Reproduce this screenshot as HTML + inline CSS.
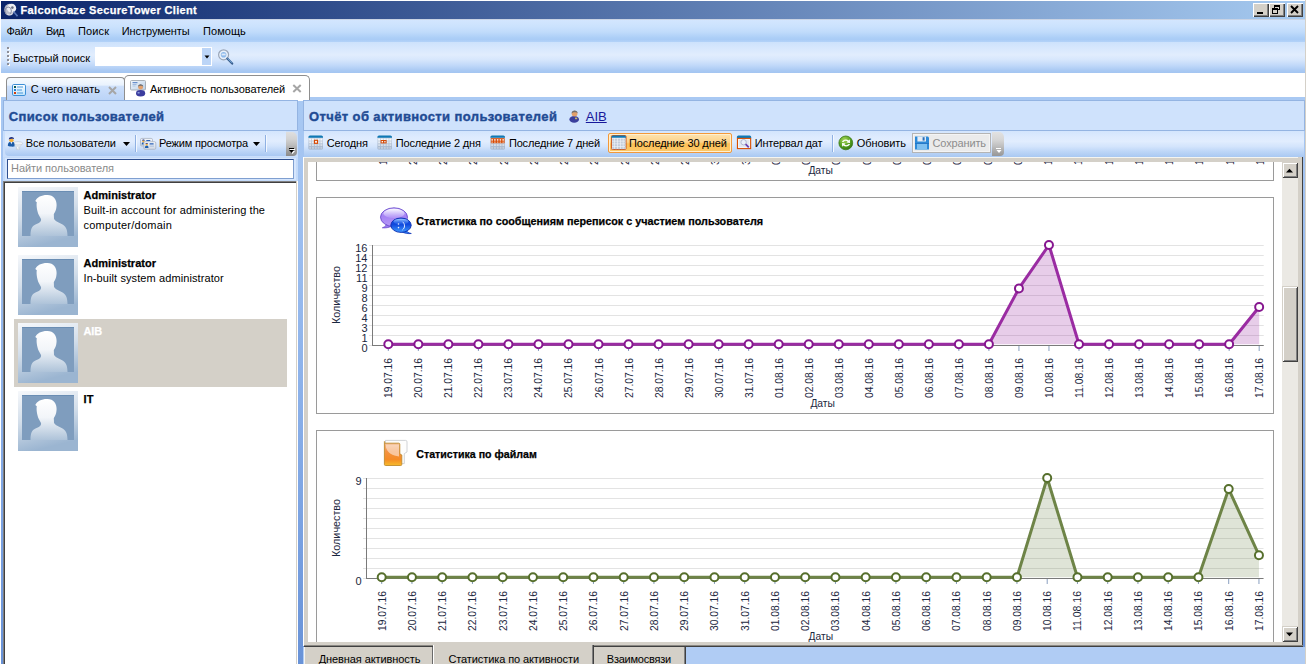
<!DOCTYPE html>
<html>
<head>
<meta charset="utf-8">
<title>FalconGaze SecureTower Client</title>
<style>
*{box-sizing:border-box;margin:0;padding:0}
html,body{width:1308px;height:664px;overflow:hidden;background:#fff}
body{font-family:"Liberation Sans", sans-serif;font-size:11px;color:#000;position:relative}
.a{position:absolute;display:block}
.t{position:absolute;white-space:nowrap}
svg{overflow:hidden}
</style>
</head>
<body>
<div class="a" style="left:0px;top:0px;width:1308px;height:664px;background:#fff"></div>
<div class="a" style="left:1px;top:97px;width:1304px;height:567px;background:linear-gradient(180deg,#a9c9f3 0%,#9fc0f0 20%,#8db2ea 50%,#779fe0 80%,#6892d7 100%)"></div>
<div class="a" style="left:1305px;top:0px;width:1px;height:664px;background:#d4d0c8"></div>
<div class="a" style="left:1306px;top:0px;width:2px;height:664px;background:#fff"></div>
<div class="a" style="left:1px;top:1px;width:1304px;height:18px;background:linear-gradient(90deg,#0a246a 0%,#a6caf0 100%)"></div>
<span class="t" style="left:20.50px;top:3.19px;font-size:11px;line-height:14px;color:#fff;letter-spacing:0.342px;font-weight:bold;-webkit-text-stroke:0.25px #fff;">FalconGaze SecureTower Client</span>
<svg class="a" style="left:3px;top:2px" width="16" height="16" viewBox="0 0 16 16">
<ellipse cx="6.5" cy="7.5" rx="5.2" ry="5.8" fill="#b9bcc8"/>
<ellipse cx="8.6" cy="6.2" rx="4.6" ry="4.4" fill="#eceef2"/>
<ellipse cx="5.2" cy="9" rx="3.2" ry="4" fill="none" stroke="#8a8fa6" stroke-width="1"/>
<circle cx="9.4" cy="5.6" r="1.3" fill="#6a6e80"/>
<path d="M10.5 9.5 L14.5 14.2" stroke="#5a78b8" stroke-width="1.6"/>
<path d="M4 12 C6 13.5 8 13 9.5 11.5" stroke="#d8dae2" stroke-width="1.2" fill="none"/>
</svg>
<div class="a" style="left:1253px;top:3px;width:16px;height:14px;background:#d4d0c8;box-shadow:inset 1px 1px 0 #fff,inset -1px -1px 0 #404040,inset -2px -2px 0 #808080"></div><div class="a" style="left:1257px;top:12px;width:6px;height:2px;background:#000"></div>
<div class="a" style="left:1269px;top:3px;width:16px;height:14px;background:#d4d0c8;box-shadow:inset 1px 1px 0 #fff,inset -1px -1px 0 #404040,inset -2px -2px 0 #808080"></div><svg class="a" style="left:1269px;top:3px" width="16" height="14" viewBox="0 0 16 14">
<rect x="5.5" y="2.5" width="5" height="4" fill="none" stroke="#000"/><rect x="5" y="2" width="6" height="2" fill="#000"/>
<rect x="3.5" y="5.5" width="5" height="5" fill="#d4d0c8" stroke="#000"/><rect x="3" y="5" width="6" height="2" fill="#000"/></svg>
<div class="a" style="left:1287px;top:3px;width:16px;height:14px;background:#d4d0c8;box-shadow:inset 1px 1px 0 #fff,inset -1px -1px 0 #404040,inset -2px -2px 0 #808080"></div><svg class="a" style="left:1287px;top:3px" width="16" height="14" viewBox="0 0 16 14">
<path d="M4 3 L11 10 M11 3 L4 10" stroke="#000" stroke-width="1.9"/></svg>
<div class="a" style="left:1px;top:19px;width:1304px;height:1px;background:#c9d3e4"></div>
<div class="a" style="left:1px;top:20px;width:1304px;height:22px;background:linear-gradient(180deg,#d3e6fe 0%,#cbe2fd 30%,#c0dbfb 55%,#adcff7 80%,#a9ccf6 88%,#b3d2f8 100%)"></div>
<span class="t" style="left:6.50px;top:24.19px;font-size:11px;line-height:14px;color:#000;letter-spacing:-0.287px;">Файл</span>
<span class="t" style="left:46.00px;top:24.19px;font-size:11px;line-height:14px;color:#000;letter-spacing:-0.602px;">Вид</span>
<span class="t" style="left:78.00px;top:24.19px;font-size:11px;line-height:14px;color:#000;letter-spacing:0.123px;">Поиск</span>
<span class="t" style="left:121.70px;top:24.19px;font-size:11px;line-height:14px;color:#000;letter-spacing:-0.063px;">Инструменты</span>
<span class="t" style="left:203.10px;top:24.19px;font-size:11px;line-height:14px;color:#000;letter-spacing:0.050px;">Помощь</span>
<div class="a" style="left:1px;top:42px;width:1304px;height:31px;background:linear-gradient(180deg,#cde2fc 0%,#d6e7fd 18%,#e1edfd 42%,#d6e6fc 58%,#c0d8f9 76%,#a9c9f3 92%,#a3c5f1 100%)"></div>
<div class="a" style="left:8px;top:48px;width:2px;height:2px;background:#fff"></div>
<div class="a" style="left:7px;top:47px;width:2px;height:2px;background:#8e8f98"></div>
<div class="a" style="left:8px;top:52px;width:2px;height:2px;background:#fff"></div>
<div class="a" style="left:7px;top:51px;width:2px;height:2px;background:#8e8f98"></div>
<div class="a" style="left:8px;top:56px;width:2px;height:2px;background:#fff"></div>
<div class="a" style="left:7px;top:55px;width:2px;height:2px;background:#8e8f98"></div>
<div class="a" style="left:8px;top:60px;width:2px;height:2px;background:#fff"></div>
<div class="a" style="left:7px;top:59px;width:2px;height:2px;background:#8e8f98"></div>
<div class="a" style="left:8px;top:64px;width:2px;height:2px;background:#fff"></div>
<div class="a" style="left:7px;top:63px;width:2px;height:2px;background:#8e8f98"></div>
<span class="t" style="left:12.90px;top:51.19px;font-size:11px;line-height:14px;color:#000;letter-spacing:-0.017px;">Быстрый поиск</span>
<div class="a" style="left:95px;top:47px;width:117px;height:19px;background:#fff"></div>
<div class="a" style="left:202px;top:48px;width:9px;height:17px;background:#bcd5f7"></div>
<svg class="a" style="left:204px;top:55px" width="6" height="4"><path d="M0.5 0.5 L5.5 0.5 L3 3.5 Z" fill="#000"/></svg>
<svg class="a" style="left:217px;top:48px" width="18" height="18" viewBox="0 0 18 18">
<circle cx="6.6" cy="6.8" r="5" fill="#e9f1fb" stroke="#9aa6b8" stroke-width="1.2"/>
<circle cx="6.6" cy="6.8" r="2.8" fill="#8cb8ea"/>
<rect x="4.6" y="5.6" width="4" height="1.8" fill="#dfeaf8"/>
<path d="M10.3 10.6 L15.2 15.6" stroke="#3a5f8f" stroke-width="2.2" stroke-linecap="round"/>
<path d="M10.6 10.4 L15 14.8" stroke="#7fb4e6" stroke-width="0.9"/>
</svg>
<div class="a" style="left:1px;top:73px;width:1304px;height:24px;background:#fff"></div>
<div class="a" style="left:6px;top:77px;width:119px;height:23px;border:1px solid #8e8e8e;border-bottom:none;border-radius:4px 4px 0 0;background:linear-gradient(180deg,#f6fafe 0%,#e9f2fd 33%,#cfe1fb 36%,#c3d9f9 70%,#bbd4f7 100%)"></div>
<svg class="a" style="left:12px;top:84px" width="14" height="12" viewBox="0 0 14 12">
<defs><linearGradient id="g1" x1="0" y1="0" x2="0" y2="1"><stop offset="0" stop-color="#fff"/><stop offset="1" stop-color="#bfe3fb"/></linearGradient></defs>
<rect x="0.5" y="0.5" width="13" height="11" rx="1.3" fill="url(#g1)" stroke="#3d8fd6"/>
<rect x="2" y="2" width="2" height="2" fill="#0f5a55"/><rect x="2" y="5" width="2" height="2" fill="#2a7fd4"/><rect x="2" y="8" width="2" height="2" fill="#d43c0a"/>
<rect x="5" y="2.5" width="6" height="1" fill="#4a9adc"/><rect x="5" y="5.5" width="5" height="1" fill="#4a9adc"/><rect x="5" y="8.5" width="6" height="1" fill="#4a9adc"/>
</svg>
<span class="t" style="left:30.70px;top:82.19px;font-size:11px;line-height:14px;color:#000;letter-spacing:-0.079px;">С чего начать</span>
<svg class="a" style="left:108px;top:86px" width="9" height="9" viewBox="0 0 9 9"><path d="M1 1 L8 8 M8 1 L1 8" stroke="#a6a6a6" stroke-width="2"/></svg>
<div class="a" style="left:124px;top:75px;width:186px;height:26px;border:1px solid #8e8e8e;border-bottom:none;border-radius:5px 5px 0 0;background:#fff"></div>
<svg class="a" style="left:130px;top:80px" width="17" height="17" viewBox="0 0 17 17">
<defs><linearGradient id="g2" x1="0" y1="0" x2="1" y2="1"><stop offset="0" stop-color="#f4f8fc"/><stop offset="1" stop-color="#b9cfe6"/></linearGradient></defs>
<rect x="0.5" y="0.5" width="15" height="9.5" rx="1" fill="url(#g2)" stroke="#a9b0b8"/>
<rect x="2.5" y="2.2" width="5" height="1" fill="#4a78c0"/><rect x="2.5" y="4.2" width="4" height="0.9" fill="#8fb0dc"/><rect x="2.5" y="5.6" width="3" height="0.9" fill="#a9c3e4"/>
<ellipse cx="10.6" cy="13.2" rx="4.6" ry="3.2" fill="#3b3c9e"/>
<circle cx="10.6" cy="7.2" r="2.4" fill="#e3a06c"/>
<path d="M8 7 C7.6 3.2 13.6 3.2 13.2 7 C12.6 5.4 8.8 5.4 8 7 Z" fill="#666a70"/>
<rect x="7.6" y="12.2" width="2" height="1.2" fill="#9fb4ea"/>
</svg>
<span class="t" style="left:150.10px;top:82.19px;font-size:11px;line-height:14px;color:#000;letter-spacing:-0.070px;">Активность пользователей</span>
<svg class="a" style="left:292px;top:84px" width="10" height="9" viewBox="0 0 10 9"><path d="M1.3 1 L8.7 8 M8.7 1 L1.3 8" stroke="#a6a6a6" stroke-width="2"/></svg>
<div class="a" style="left:3px;top:100px;width:295px;height:31px;background:#cfe2fc;border:1px solid #94b4e2"></div>
<span class="t" style="left:8.70px;top:108.50px;font-size:13px;line-height:16px;color:#1f4b94;letter-spacing:0.371px;font-weight:bold;-webkit-text-stroke:0.4px #1f4b94;">Список пользователей</span>
<div class="a" style="left:3px;top:131px;width:295px;height:26px;background:#c9defb"></div>
<div class="a" style="left:5px;top:131px;width:281px;height:25px;background:linear-gradient(180deg,#d3e5fd 0%,#deebfe 25%,#e1edfe 40%,#d3e4fc 60%,#bcd5f7 80%,#a9c8f2 100%);border-radius:0 0 0 4px"></div>
<svg class="a" style="left:7px;top:136px" width="17" height="15" viewBox="0 0 17 15">
<defs><linearGradient id="fg" x1="0" y1="0" x2="0" y2="1"><stop offset="0" stop-color="#f6f8fb"/><stop offset="1" stop-color="#c9d3df"/></linearGradient></defs>
<path d="M6.2 7.6 L15.5 7.6 L12.7 11 L12.7 13.6 L9.3 13.6 L9.3 11 Z" fill="url(#fg)" stroke="#c2cbd6" stroke-width="0.5"/>
<ellipse cx="10.9" cy="7.3" rx="4.8" ry="1.7" fill="#eef2f7" stroke="#bcc6d2" stroke-width="0.6"/>
<path d="M10.4 11 L11.2 13.4" stroke="#fff" stroke-width="0.8"/>
<path d="M0.8 9.8 C0.8 6.6 2.4 5.5 4.4 5.5 C6.4 5.5 7.5 6.6 7.5 8.6 L7.5 10.6 C5 10.9 2.4 10.6 0.8 9.8 Z" fill="#1b5aa6"/>
<path d="M3.3 5.7 L5.5 5.7 L4.4 8.2 Z" fill="#eaf1fa"/>
<ellipse cx="4.4" cy="4.2" rx="2.2" ry="1.9" fill="#f4b23c"/>
<path d="M1.8 3.4 C1.6 0.2 7.2 0.1 7.1 3.2 C6 2.6 3.4 2.6 1.8 3.4 Z" fill="#1f2f80"/>
</svg>
<span class="t" style="left:25.80px;top:136.19px;font-size:11px;line-height:14px;color:#000;letter-spacing:-0.122px;">Все пользователи</span>
<svg class="a" style="left:123px;top:142px" width="7" height="4"><path d="M0 0 L7 0 L3.5 4 Z" fill="#000"/></svg>
<div class="a" style="left:135px;top:135px;width:1px;height:17px;background:#8fb1e3"></div>
<div class="a" style="left:136px;top:135px;width:1px;height:17px;background:#f3f8ff"></div>
<svg class="a" style="left:140px;top:136px" width="17" height="15" viewBox="0 0 17 15">
<defs><linearGradient id="cdg" x1="0" y1="0" x2="0" y2="1"><stop offset="0" stop-color="#f3f6fa"/><stop offset="1" stop-color="#cfd8e4"/></linearGradient></defs>
<g id="idc"><rect x="0.5" y="2.4" width="12" height="7.6" rx="1.3" fill="url(#cdg)" stroke="#a9b3c1" stroke-width="0.8"/>
<path d="M1.6 8.6 C1.6 6.8 2.4 6.2 3.4 6.2 C4.4 6.2 5.2 6.8 5.2 8.6 Z" fill="#1d5fae"/>
<ellipse cx="3.4" cy="5.3" rx="1.2" ry="1.1" fill="#f4b23c"/>
<path d="M2 4.8 C2 3.2 4.9 3.2 4.8 4.7 C4 4.3 2.8 4.3 2 4.8 Z" fill="#1f2f80"/>
<rect x="6.2" y="4" width="4.2" height="1.1" rx="0.5" fill="#2a62b8"/></g>
<use href="#idc" x="3.3" y="3.3"/>
<rect x="9.6" y="9.7" width="4.4" height="0.8" fill="#9cb4d8"/>
</svg>
<span class="t" style="left:159.00px;top:136.19px;font-size:11px;line-height:14px;color:#000;letter-spacing:-0.158px;">Режим просмотра</span>
<svg class="a" style="left:253px;top:142px" width="7" height="4"><path d="M0 0 L7 0 L3.5 4 Z" fill="#000"/></svg>
<div class="a" style="left:265px;top:135px;width:1px;height:17px;background:#8fb1e3"></div>
<div class="a" style="left:266px;top:135px;width:1px;height:17px;background:#f3f8ff"></div>
<div class="a" style="left:286px;top:132px;width:11px;height:24px;border-radius:0 5px 4px 0;background:linear-gradient(180deg,#dfdfdf 0%,#d2d2d2 30%,#bdbdbd 55%,#9d9d9d 80%,#8a8a8a 100%)"></div>
<div class="a" style="left:290px;top:149px;width:5px;height:1px;background:#fff"></div>
<div class="a" style="left:289px;top:148px;width:5px;height:1px;background:#000"></div>
<svg class="a" style="left:289px;top:150px" width="7" height="5"><path d="M1 1 L6 1 L3.5 4 Z" fill="#fff"/><path d="M0 0 L5 0 L2.5 3 Z" fill="#000"/></svg>
<div class="a" style="left:3px;top:157px;width:295px;height:24px;background:#c4dbfa"></div>
<div class="a" style="left:5px;top:158px;width:291px;height:22px;background:#d6e6fd"></div>
<div class="a" style="left:7px;top:159px;width:287px;height:20px;background:#fff;border:1px solid #7f9fd0;border-top-color:#2e4f8f;border-left-color:#2e4f8f"></div>
<span class="t" style="left:11.10px;top:161.19px;font-size:11px;line-height:14px;color:#8a8a8a;letter-spacing:-0.073px;">Найти пользователя</span>
<div class="a" style="left:3px;top:181px;width:294px;height:483px;background:#fff;border-left:1px solid #808080;border-top:1px solid #808080"></div>
<div class="a" style="left:4px;top:182px;width:293px;height:482px;background:#fff;border-left:1px solid #404040;border-top:1px solid #404040"></div>
<div class="a" style="left:296px;top:181px;width:1px;height:483px;background:#d4d0c8"></div>
<div class="a" style="left:297px;top:181px;width:1px;height:483px;background:#fff"></div>
<div class="a" style="left:14px;top:319px;width:273px;height:68px;background:#d4d0c8"></div>
<svg class="a" style="left:18px;top:187px" width="60" height="60" viewBox="0 0 60 60">
<defs><linearGradient id="av0" x1="0" y1="0" x2="0.25" y2="1"><stop offset="0" stop-color="#f6f8fb"/><stop offset="0.5" stop-color="#d3deea"/><stop offset="1" stop-color="#9bb5d1"/></linearGradient>
<linearGradient id="sl0" x1="0" y1="0" x2="0" y2="1"><stop offset="0" stop-color="#ffffff"/><stop offset="0.45" stop-color="#f2f5f9"/><stop offset="1" stop-color="#aec3d9"/></linearGradient></defs>
<rect width="60" height="60" fill="url(#av0)"/>
<rect x="4" y="4" width="52" height="45" fill="#7f9dbe"/>
<rect x="4" y="4" width="52" height="1" fill="#6a8db3"/>
<path transform="translate(4,4)" d="M 8.5,45 C 8.5,38 10,35 14,33.3 C 17.5,32 19.5,30.5 19,28 L 16.8,24 C 15,20 14.2,14 14.8,11.2 L 13.3,10 C 15,6 20,3.8 25.5,4 C 31.5,4.2 34.8,8.5 34.6,14 C 34.5,17 34,19 33,21 L 31.8,23 L 32,28 C 34,31 38,32 41,33.8 C 44.5,36 45.5,40 45.5,45 Z" fill="url(#sl0)"/>
</svg>
<svg class="a" style="left:18px;top:255px" width="60" height="60" viewBox="0 0 60 60">
<defs><linearGradient id="av1" x1="0" y1="0" x2="0.25" y2="1"><stop offset="0" stop-color="#f6f8fb"/><stop offset="0.5" stop-color="#d3deea"/><stop offset="1" stop-color="#9bb5d1"/></linearGradient>
<linearGradient id="sl1" x1="0" y1="0" x2="0" y2="1"><stop offset="0" stop-color="#ffffff"/><stop offset="0.45" stop-color="#f2f5f9"/><stop offset="1" stop-color="#aec3d9"/></linearGradient></defs>
<rect width="60" height="60" fill="url(#av1)"/>
<rect x="4" y="4" width="52" height="45" fill="#7f9dbe"/>
<rect x="4" y="4" width="52" height="1" fill="#6a8db3"/>
<path transform="translate(4,4)" d="M 8.5,45 C 8.5,38 10,35 14,33.3 C 17.5,32 19.5,30.5 19,28 L 16.8,24 C 15,20 14.2,14 14.8,11.2 L 13.3,10 C 15,6 20,3.8 25.5,4 C 31.5,4.2 34.8,8.5 34.6,14 C 34.5,17 34,19 33,21 L 31.8,23 L 32,28 C 34,31 38,32 41,33.8 C 44.5,36 45.5,40 45.5,45 Z" fill="url(#sl1)"/>
</svg>
<svg class="a" style="left:18px;top:323px" width="60" height="60" viewBox="0 0 60 60">
<defs><linearGradient id="av2" x1="0" y1="0" x2="0.25" y2="1"><stop offset="0" stop-color="#f6f8fb"/><stop offset="0.5" stop-color="#d3deea"/><stop offset="1" stop-color="#9bb5d1"/></linearGradient>
<linearGradient id="sl2" x1="0" y1="0" x2="0" y2="1"><stop offset="0" stop-color="#ffffff"/><stop offset="0.45" stop-color="#f2f5f9"/><stop offset="1" stop-color="#aec3d9"/></linearGradient></defs>
<rect width="60" height="60" fill="url(#av2)"/>
<rect x="4" y="4" width="52" height="45" fill="#7f9dbe"/>
<rect x="4" y="4" width="52" height="1" fill="#6a8db3"/>
<path transform="translate(4,4)" d="M 8.5,45 C 8.5,38 10,35 14,33.3 C 17.5,32 19.5,30.5 19,28 L 16.8,24 C 15,20 14.2,14 14.8,11.2 L 13.3,10 C 15,6 20,3.8 25.5,4 C 31.5,4.2 34.8,8.5 34.6,14 C 34.5,17 34,19 33,21 L 31.8,23 L 32,28 C 34,31 38,32 41,33.8 C 44.5,36 45.5,40 45.5,45 Z" fill="url(#sl2)"/>
</svg>
<svg class="a" style="left:18px;top:391px" width="60" height="60" viewBox="0 0 60 60">
<defs><linearGradient id="av3" x1="0" y1="0" x2="0.25" y2="1"><stop offset="0" stop-color="#f6f8fb"/><stop offset="0.5" stop-color="#d3deea"/><stop offset="1" stop-color="#9bb5d1"/></linearGradient>
<linearGradient id="sl3" x1="0" y1="0" x2="0" y2="1"><stop offset="0" stop-color="#ffffff"/><stop offset="0.45" stop-color="#f2f5f9"/><stop offset="1" stop-color="#aec3d9"/></linearGradient></defs>
<rect width="60" height="60" fill="url(#av3)"/>
<rect x="4" y="4" width="52" height="45" fill="#7f9dbe"/>
<rect x="4" y="4" width="52" height="1" fill="#6a8db3"/>
<path transform="translate(4,4)" d="M 8.5,45 C 8.5,38 10,35 14,33.3 C 17.5,32 19.5,30.5 19,28 L 16.8,24 C 15,20 14.2,14 14.8,11.2 L 13.3,10 C 15,6 20,3.8 25.5,4 C 31.5,4.2 34.8,8.5 34.6,14 C 34.5,17 34,19 33,21 L 31.8,23 L 32,28 C 34,31 38,32 41,33.8 C 44.5,36 45.5,40 45.5,45 Z" fill="url(#sl3)"/>
</svg>
<span class="t" style="left:83.50px;top:188.19px;font-size:11px;line-height:14px;color:#000;letter-spacing:0.037px;font-weight:bold;-webkit-text-stroke:0.25px #000;">Administrator</span>
<span class="t" style="left:83.50px;top:203.19px;font-size:11px;line-height:14px;color:#000;letter-spacing:0.096px;">Built-in account for administering the</span>
<span class="t" style="left:83.50px;top:218.19px;font-size:11px;line-height:14px;color:#000;letter-spacing:0.240px;">computer/domain</span>
<span class="t" style="left:83.50px;top:256.19px;font-size:11px;line-height:14px;color:#000;letter-spacing:0.037px;font-weight:bold;-webkit-text-stroke:0.25px #000;">Administrator</span>
<span class="t" style="left:83.50px;top:271.19px;font-size:11px;line-height:14px;color:#000;letter-spacing:0.095px;">In-built system administrator</span>
<span class="t" style="left:83.50px;top:324.19px;font-size:11px;line-height:14px;color:#fff;letter-spacing:-0.118px;font-weight:bold;-webkit-text-stroke:0.25px #fff;">AIB</span>
<span class="t" style="left:83.50px;top:392.19px;font-size:11px;line-height:14px;color:#000;letter-spacing:0.284px;font-weight:bold;-webkit-text-stroke:0.25px #000;">IT</span>
<div class="a" style="left:303px;top:100px;width:1002px;height:31px;background:#cfe2fc;border:1px solid #94b4e2"></div>
<span class="t" style="left:309.00px;top:108.50px;font-size:13px;line-height:16px;color:#1f4b94;letter-spacing:0.388px;font-weight:bold;-webkit-text-stroke:0.4px #1f4b94;">Отчёт об активности пользователей</span>
<svg class="a" style="left:569px;top:109px" width="11" height="14" viewBox="0 0 11 14">
<ellipse cx="5.2" cy="10.4" rx="4.8" ry="3.4" fill="#3b3f9c"/>
<circle cx="5.6" cy="4.6" r="2.9" fill="#e3a06a"/>
<path d="M2.6 4.4 C2.6 0.6 8.6 0.6 8.7 4.2 C7.4 2.8 4 2.8 2.6 4.4 Z" fill="#6f6f6f"/>
<rect x="6" y="8.6" width="2.2" height="1.6" fill="#c9b36a"/>
</svg>
<span class="t" style="left:585.80px;top:108.50px;font-size:13px;line-height:16px;color:#18189a;letter-spacing:-0.023px;text-decoration:underline">AIB</span>
<div class="a" style="left:304px;top:131px;width:1000px;height:26px;background:linear-gradient(180deg,#d3e5fd 0%,#deebfe 25%,#e1edfe 40%,#d3e4fc 60%,#bcd5f7 80%,#a9c8f2 100%)"></div>
<svg class="a" style="left:308px;top:135px" width="16" height="15" viewBox="0 0 16 15"><defs><linearGradient id="cg1308" x1="0" y1="0" x2="0" y2="1"><stop offset="0" stop-color="#d6dfea"/><stop offset="1" stop-color="#9cafc8"/></linearGradient></defs><rect x="0.4" y="0.5" width="14.6" height="14" rx="1.6" fill="url(#cg1308)" stroke="none" stroke-width="0"/><path d="M0.4 2.8 V2 Q0.4 0.5 2 0.5 H13.4 Q15 0.5 15 2 V2.8 Z" fill="#0f79b5"/><rect x="1.2" y="3.6" width="1.9" height="1.9" fill="#fff" opacity="0.85"/><rect x="4.0" y="3.6" width="1.9" height="1.9" fill="#fff" opacity="0.85"/><rect x="6.8" y="3.6" width="1.9" height="1.9" fill="#fff" opacity="0.85"/><rect x="9.6" y="3.6" width="1.9" height="1.9" fill="#fff" opacity="0.85"/><rect x="12.4" y="3.6" width="1.9" height="1.9" fill="#fff" opacity="0.85"/><rect x="1.2" y="6.4" width="1.9" height="1.9" fill="#fff" opacity="0.68"/><rect x="4.0" y="6.4" width="1.9" height="1.9" fill="#fff" opacity="0.68"/><rect x="6.8" y="6.4" width="1.9" height="1.9" fill="#fff" opacity="0.68"/><rect x="9.6" y="6.4" width="1.9" height="1.9" fill="#fff" opacity="0.68"/><rect x="12.4" y="6.4" width="1.9" height="1.9" fill="#fff" opacity="0.68"/><rect x="1.2" y="9.2" width="1.9" height="1.9" fill="#fff" opacity="0.51"/><rect x="4.0" y="9.2" width="1.9" height="1.9" fill="#fff" opacity="0.51"/><rect x="6.8" y="9.2" width="1.9" height="1.9" fill="#fff" opacity="0.51"/><rect x="9.6" y="9.2" width="1.9" height="1.9" fill="#fff" opacity="0.51"/><rect x="12.4" y="9.2" width="1.9" height="1.9" fill="#fff" opacity="0.51"/><rect x="1.2" y="12.0" width="1.9" height="1.9" fill="#fff" opacity="0.34"/><rect x="4.0" y="12.0" width="1.9" height="1.9" fill="#fff" opacity="0.34"/><rect x="6.8" y="12.0" width="1.9" height="1.9" fill="#fff" opacity="0.34"/><rect x="9.6" y="12.0" width="1.9" height="1.9" fill="#fff" opacity="0.34"/><rect x="12.4" y="12.0" width="1.9" height="1.9" fill="#fff" opacity="0.34"/><rect x="6.5" y="5.3" width="3" height="3" fill="#fff" stroke="#d64a05" stroke-width="1.2"/></svg>
<span class="t" style="left:326.80px;top:136.19px;font-size:11px;line-height:14px;color:#000;letter-spacing:-0.182px;">Сегодня</span>
<svg class="a" style="left:377px;top:135px" width="16" height="15" viewBox="0 0 16 15"><defs><linearGradient id="cg2377" x1="0" y1="0" x2="0" y2="1"><stop offset="0" stop-color="#d6dfea"/><stop offset="1" stop-color="#9cafc8"/></linearGradient></defs><rect x="0.4" y="0.5" width="14.6" height="14" rx="1.6" fill="url(#cg2377)" stroke="none" stroke-width="0"/><path d="M0.4 2.8 V2 Q0.4 0.5 2 0.5 H13.4 Q15 0.5 15 2 V2.8 Z" fill="#0f79b5"/><rect x="1.2" y="3.6" width="1.9" height="1.9" fill="#fff" opacity="0.85"/><rect x="4.0" y="3.6" width="1.9" height="1.9" fill="#fff" opacity="0.85"/><rect x="6.8" y="3.6" width="1.9" height="1.9" fill="#fff" opacity="0.85"/><rect x="9.6" y="3.6" width="1.9" height="1.9" fill="#fff" opacity="0.85"/><rect x="12.4" y="3.6" width="1.9" height="1.9" fill="#fff" opacity="0.85"/><rect x="1.2" y="6.4" width="1.9" height="1.9" fill="#fff" opacity="0.68"/><rect x="4.0" y="6.4" width="1.9" height="1.9" fill="#fff" opacity="0.68"/><rect x="6.8" y="6.4" width="1.9" height="1.9" fill="#fff" opacity="0.68"/><rect x="9.6" y="6.4" width="1.9" height="1.9" fill="#fff" opacity="0.68"/><rect x="12.4" y="6.4" width="1.9" height="1.9" fill="#fff" opacity="0.68"/><rect x="1.2" y="9.2" width="1.9" height="1.9" fill="#fff" opacity="0.51"/><rect x="4.0" y="9.2" width="1.9" height="1.9" fill="#fff" opacity="0.51"/><rect x="6.8" y="9.2" width="1.9" height="1.9" fill="#fff" opacity="0.51"/><rect x="9.6" y="9.2" width="1.9" height="1.9" fill="#fff" opacity="0.51"/><rect x="12.4" y="9.2" width="1.9" height="1.9" fill="#fff" opacity="0.51"/><rect x="1.2" y="12.0" width="1.9" height="1.9" fill="#fff" opacity="0.34"/><rect x="4.0" y="12.0" width="1.9" height="1.9" fill="#fff" opacity="0.34"/><rect x="6.8" y="12.0" width="1.9" height="1.9" fill="#fff" opacity="0.34"/><rect x="9.6" y="12.0" width="1.9" height="1.9" fill="#fff" opacity="0.34"/><rect x="12.4" y="12.0" width="1.9" height="1.9" fill="#fff" opacity="0.34"/><rect x="3.6" y="5" width="6" height="3.4" fill="#d64a05"/><rect x="4.6" y="6" width="1.4" height="1.4" fill="#fff"/><rect x="7.2" y="6" width="1.4" height="1.4" fill="#dfe6f0"/></svg>
<span class="t" style="left:395.70px;top:136.19px;font-size:11px;line-height:14px;color:#000;letter-spacing:-0.144px;">Последние 2 дня</span>
<svg class="a" style="left:490px;top:135px" width="16" height="15" viewBox="0 0 16 15"><defs><linearGradient id="cg7490" x1="0" y1="0" x2="0" y2="1"><stop offset="0" stop-color="#d6dfea"/><stop offset="1" stop-color="#9cafc8"/></linearGradient></defs><rect x="0.4" y="0.5" width="14.6" height="14" rx="1.6" fill="url(#cg7490)" stroke="none" stroke-width="0"/><path d="M0.4 2.8 V2 Q0.4 0.5 2 0.5 H13.4 Q15 0.5 15 2 V2.8 Z" fill="#0f79b5"/><rect x="1.2" y="3.6" width="1.9" height="1.9" fill="#fff" opacity="0.85"/><rect x="4.0" y="3.6" width="1.9" height="1.9" fill="#fff" opacity="0.85"/><rect x="6.8" y="3.6" width="1.9" height="1.9" fill="#fff" opacity="0.85"/><rect x="9.6" y="3.6" width="1.9" height="1.9" fill="#fff" opacity="0.85"/><rect x="12.4" y="3.6" width="1.9" height="1.9" fill="#fff" opacity="0.85"/><rect x="1.2" y="6.4" width="1.9" height="1.9" fill="#fff" opacity="0.68"/><rect x="4.0" y="6.4" width="1.9" height="1.9" fill="#fff" opacity="0.68"/><rect x="6.8" y="6.4" width="1.9" height="1.9" fill="#fff" opacity="0.68"/><rect x="9.6" y="6.4" width="1.9" height="1.9" fill="#fff" opacity="0.68"/><rect x="12.4" y="6.4" width="1.9" height="1.9" fill="#fff" opacity="0.68"/><rect x="1.2" y="9.2" width="1.9" height="1.9" fill="#fff" opacity="0.51"/><rect x="4.0" y="9.2" width="1.9" height="1.9" fill="#fff" opacity="0.51"/><rect x="6.8" y="9.2" width="1.9" height="1.9" fill="#fff" opacity="0.51"/><rect x="9.6" y="9.2" width="1.9" height="1.9" fill="#fff" opacity="0.51"/><rect x="12.4" y="9.2" width="1.9" height="1.9" fill="#fff" opacity="0.51"/><rect x="1.2" y="12.0" width="1.9" height="1.9" fill="#fff" opacity="0.34"/><rect x="4.0" y="12.0" width="1.9" height="1.9" fill="#fff" opacity="0.34"/><rect x="6.8" y="12.0" width="1.9" height="1.9" fill="#fff" opacity="0.34"/><rect x="9.6" y="12.0" width="1.9" height="1.9" fill="#fff" opacity="0.34"/><rect x="12.4" y="12.0" width="1.9" height="1.9" fill="#fff" opacity="0.34"/><rect x="0.8" y="3.2" width="13.8" height="5" fill="#d64a05"/><rect x="1.40" y="4.2" width="1.5" height="1.4" fill="#fff"/><rect x="1.40" y="6.6" width="1.5" height="1" fill="#f6d9c8"/><rect x="4.15" y="4.2" width="1.5" height="1.4" fill="#fff"/><rect x="4.15" y="6.6" width="1.5" height="1" fill="#f6d9c8"/><rect x="6.90" y="4.2" width="1.5" height="1.4" fill="#fff"/><rect x="6.90" y="6.6" width="1.5" height="1" fill="#f6d9c8"/><rect x="9.65" y="4.2" width="1.5" height="1.4" fill="#fff"/><rect x="9.65" y="6.6" width="1.5" height="1" fill="#f6d9c8"/><rect x="12.40" y="4.2" width="1.5" height="1.4" fill="#fff"/><rect x="12.40" y="6.6" width="1.5" height="1" fill="#f6d9c8"/></svg>
<span class="t" style="left:508.90px;top:136.19px;font-size:11px;line-height:14px;color:#000;letter-spacing:-0.148px;">Последние 7 дней</span>
<div class="a" style="left:608px;top:133px;width:124px;height:20px;border:1px solid #f3993a;border-radius:2px;background:linear-gradient(180deg,#fde3b0 0%,#fdd38a 45%,#fbc056 55%,#fdc96a 100%);box-shadow:inset 0 0 0 1px #fff0cf"></div>
<svg class="a" style="left:611px;top:135px" width="16" height="15" viewBox="0 0 16 15"><defs><linearGradient id="cg30611" x1="0" y1="0" x2="0" y2="1"><stop offset="0" stop-color="#d6dfea"/><stop offset="1" stop-color="#9cafc8"/></linearGradient></defs><rect x="0.4" y="0.5" width="14.6" height="14" rx="1" fill="#f1f4f8" stroke="#c8541a" stroke-width="1"/><path d="M0.4 2.8 V2 Q0.4 0.5 2 0.5 H13.4 Q15 0.5 15 2 V2.8 Z" fill="#0f79b5"/><rect x="1.2" y="3.6" width="2.2" height="2.2" fill="#c3cddb"/><rect x="4.0" y="3.6" width="2.2" height="2.2" fill="#c3cddb"/><rect x="6.8" y="3.6" width="2.2" height="2.2" fill="#c3cddb"/><rect x="9.6" y="3.6" width="2.2" height="2.2" fill="#c3cddb"/><rect x="12.4" y="3.6" width="2.2" height="2.2" fill="#c3cddb"/><rect x="1.2" y="6.4" width="2.2" height="2.2" fill="#c3cddb"/><rect x="4.0" y="6.4" width="2.2" height="2.2" fill="#c3cddb"/><rect x="6.8" y="6.4" width="2.2" height="2.2" fill="#c3cddb"/><rect x="9.6" y="6.4" width="2.2" height="2.2" fill="#c3cddb"/><rect x="12.4" y="6.4" width="2.2" height="2.2" fill="#c3cddb"/><rect x="1.2" y="9.2" width="2.2" height="2.2" fill="#c3cddb"/><rect x="4.0" y="9.2" width="2.2" height="2.2" fill="#c3cddb"/><rect x="6.8" y="9.2" width="2.2" height="2.2" fill="#c3cddb"/><rect x="9.6" y="9.2" width="2.2" height="2.2" fill="#c3cddb"/><rect x="12.4" y="9.2" width="2.2" height="2.2" fill="#c3cddb"/><rect x="1.2" y="12.0" width="2.2" height="2.2" fill="#c3cddb"/><rect x="4.0" y="12.0" width="2.2" height="2.2" fill="#c3cddb"/><rect x="6.8" y="12.0" width="2.2" height="2.2" fill="#c3cddb"/><rect x="9.6" y="12.0" width="2.2" height="2.2" fill="#c3cddb"/><rect x="12.4" y="12.0" width="2.2" height="2.2" fill="#c3cddb"/></svg>
<span class="t" style="left:628.90px;top:136.19px;font-size:11px;line-height:14px;color:#000;letter-spacing:-0.111px;">Последние 30 дней</span>
<svg class="a" style="left:736px;top:135px" width="16" height="15" viewBox="0 0 16 15"><defs><linearGradient id="cgi736" x1="0" y1="0" x2="0" y2="1"><stop offset="0" stop-color="#d6dfea"/><stop offset="1" stop-color="#9cafc8"/></linearGradient></defs><path d="M0.9 3.2 V2 Q0.9 0.5 2.4 0.5 H13.7 Q15.2 0.5 15.2 2 V3.2 Z" fill="#0f79b5"/><rect x="1.45" y="3.4" width="13.2" height="10.2" fill="#e3e8ef" stroke="#d94e00" stroke-width="1.1"/><rect x="2.6" y="4.4" width="10.9" height="8.2" fill="none" stroke="#f6f8fb" stroke-width="0.8"/><circle cx="7.6" cy="7.2" r="2.7" fill="#eaf1fb" stroke="#aab4cc" stroke-width="0.9"/><path d="M9.6 9.2 L12.8 12.4" stroke="#6a3fb0" stroke-width="1.7"/></svg>
<span class="t" style="left:754.70px;top:136.19px;font-size:11px;line-height:14px;color:#000;letter-spacing:-0.182px;">Интервал дат</span>
<div class="a" style="left:832px;top:135px;width:1px;height:17px;background:#8fb1e3"></div>
<div class="a" style="left:833px;top:135px;width:1px;height:17px;background:#f3f8ff"></div>
<svg class="a" style="left:838px;top:135px" width="16" height="16" viewBox="0 0 16 16">
<defs><radialGradient id="rg" cx="0.4" cy="0.3" r="0.8"><stop offset="0" stop-color="#a9d95a"/><stop offset="0.6" stop-color="#4f9a1e"/><stop offset="1" stop-color="#2f6a10"/></radialGradient></defs>
<circle cx="7.8" cy="7.9" r="6.9" fill="url(#rg)" stroke="#3b7a18" stroke-width="0.8"/>
<path d="M4 7 C4.5 4.6 8.5 3.6 10.6 5.4 L11.8 4.2 L12 8 L8.4 7.6 L9.6 6.5 C8.2 5.4 6 5.8 5.6 7 Z" fill="#fff"/>
<path d="M12 9 C11.5 11.4 7.5 12.4 5.4 10.6 L4.2 11.8 L4 8 L7.6 8.4 L6.4 9.5 C7.8 10.6 10 10.2 10.4 9 Z" fill="#fff"/>
</svg>
<span class="t" style="left:856.80px;top:136.19px;font-size:11px;line-height:14px;color:#000;letter-spacing:-0.089px;">Обновить</span>
<div class="a" style="left:912px;top:133px;width:79px;height:20px;border:1px solid #b4b4b4;background:#ebebeb;box-shadow:inset 0 0 0 1px #f4f4f4"></div>
<svg class="a" style="left:914px;top:135px" width="16" height="16" viewBox="0 0 16 16">
<path d="M1 1.5 H14 L15 2.5 V14.5 H1 Z" fill="#2d8ad8"/>
<rect x="3.4" y="1.5" width="8.6" height="5" fill="#e6edf5"/><rect x="8.6" y="2.2" width="2" height="3.4" fill="#2d6fb8"/>
<rect x="3" y="8.6" width="10" height="5.9" fill="#7fc0f0"/><rect x="1" y="8" width="14" height="0.8" fill="#1f6fc0"/>
</svg>
<span class="t" style="left:932.50px;top:136.19px;font-size:11px;line-height:14px;color:#8d8d8d;letter-spacing:-0.141px;">Сохранить</span>
<div class="a" style="left:992px;top:132px;width:12px;height:24px;border-radius:0 5px 4px 0;background:linear-gradient(180deg,#e2e2e2 0%,#d4d4d4 35%,#bcbcbc 62%,#a4a4a4 85%,#979797 100%)"></div>
<div class="a" style="left:996px;top:148px;width:5px;height:1px;background:#fff"></div>
<svg class="a" style="left:996px;top:150px" width="6" height="4"><path d="M0.5 0 L5.5 0 L3 3 Z" fill="#fff"/></svg>
<div class="a" style="left:303px;top:157px;width:1000px;height:489px;background:#d4d0c8"></div>
<div class="a" style="left:303px;top:157px;width:1px;height:489px;background:#fff"></div>
<div class="a" style="left:304px;top:157px;width:994px;height:1px;background:#f4f4f0"></div>
<div class="a" style="left:1302px;top:157px;width:1px;height:489px;background:#404040"></div>
<div class="a" style="left:304px;top:645px;width:999px;height:1px;background:#404040"></div>
<div class="a" style="left:308px;top:162px;width:974px;height:480px;background:#fff"></div>
<svg class="a" style="left:308px;top:162px" width="974" height="480" viewBox="308 162 974 480" font-family='"Liberation Sans", sans-serif' font-size="11"><rect x="316.5" y="100.5" width="957" height="80" fill="#fff" stroke="#9a9a9a"/><text transform="translate(386.50,165.0) rotate(-90)" textLength="40" lengthAdjust="spacingAndGlyphs" fill="#1b2740">19.07.16</text><text transform="translate(416.75,165.0) rotate(-90)" textLength="40" lengthAdjust="spacingAndGlyphs" fill="#1b2740">20.07.16</text><text transform="translate(447.00,165.0) rotate(-90)" textLength="40" lengthAdjust="spacingAndGlyphs" fill="#1b2740">21.07.16</text><text transform="translate(477.25,165.0) rotate(-90)" textLength="40" lengthAdjust="spacingAndGlyphs" fill="#1b2740">22.07.16</text><text transform="translate(507.50,165.0) rotate(-90)" textLength="40" lengthAdjust="spacingAndGlyphs" fill="#1b2740">23.07.16</text><text transform="translate(537.75,165.0) rotate(-90)" textLength="40" lengthAdjust="spacingAndGlyphs" fill="#1b2740">24.07.16</text><text transform="translate(568.00,165.0) rotate(-90)" textLength="40" lengthAdjust="spacingAndGlyphs" fill="#1b2740">25.07.16</text><text transform="translate(598.25,165.0) rotate(-90)" textLength="40" lengthAdjust="spacingAndGlyphs" fill="#1b2740">26.07.16</text><text transform="translate(628.50,165.0) rotate(-90)" textLength="40" lengthAdjust="spacingAndGlyphs" fill="#1b2740">27.07.16</text><text transform="translate(658.75,165.0) rotate(-90)" textLength="40" lengthAdjust="spacingAndGlyphs" fill="#1b2740">28.07.16</text><text transform="translate(689.00,165.0) rotate(-90)" textLength="40" lengthAdjust="spacingAndGlyphs" fill="#1b2740">29.07.16</text><text transform="translate(719.25,165.0) rotate(-90)" textLength="40" lengthAdjust="spacingAndGlyphs" fill="#1b2740">30.07.16</text><text transform="translate(749.50,165.0) rotate(-90)" textLength="40" lengthAdjust="spacingAndGlyphs" fill="#1b2740">31.07.16</text><text transform="translate(779.75,165.0) rotate(-90)" textLength="40" lengthAdjust="spacingAndGlyphs" fill="#1b2740">01.08.16</text><text transform="translate(810.00,165.0) rotate(-90)" textLength="40" lengthAdjust="spacingAndGlyphs" fill="#1b2740">02.08.16</text><text transform="translate(840.25,165.0) rotate(-90)" textLength="40" lengthAdjust="spacingAndGlyphs" fill="#1b2740">03.08.16</text><text transform="translate(870.50,165.0) rotate(-90)" textLength="40" lengthAdjust="spacingAndGlyphs" fill="#1b2740">04.08.16</text><text transform="translate(900.75,165.0) rotate(-90)" textLength="40" lengthAdjust="spacingAndGlyphs" fill="#1b2740">05.08.16</text><text transform="translate(931.00,165.0) rotate(-90)" textLength="40" lengthAdjust="spacingAndGlyphs" fill="#1b2740">06.08.16</text><text transform="translate(961.25,165.0) rotate(-90)" textLength="40" lengthAdjust="spacingAndGlyphs" fill="#1b2740">07.08.16</text><text transform="translate(991.50,165.0) rotate(-90)" textLength="40" lengthAdjust="spacingAndGlyphs" fill="#1b2740">08.08.16</text><text transform="translate(1021.75,165.0) rotate(-90)" textLength="40" lengthAdjust="spacingAndGlyphs" fill="#1b2740">09.08.16</text><text transform="translate(1052.00,165.0) rotate(-90)" textLength="40" lengthAdjust="spacingAndGlyphs" fill="#1b2740">10.08.16</text><text transform="translate(1082.25,165.0) rotate(-90)" textLength="40" lengthAdjust="spacingAndGlyphs" fill="#1b2740">11.08.16</text><text transform="translate(1112.50,165.0) rotate(-90)" textLength="40" lengthAdjust="spacingAndGlyphs" fill="#1b2740">12.08.16</text><text transform="translate(1142.75,165.0) rotate(-90)" textLength="40" lengthAdjust="spacingAndGlyphs" fill="#1b2740">13.08.16</text><text transform="translate(1173.00,165.0) rotate(-90)" textLength="40" lengthAdjust="spacingAndGlyphs" fill="#1b2740">14.08.16</text><text transform="translate(1203.25,165.0) rotate(-90)" textLength="40" lengthAdjust="spacingAndGlyphs" fill="#1b2740">15.08.16</text><text transform="translate(1233.50,165.0) rotate(-90)" textLength="40" lengthAdjust="spacingAndGlyphs" fill="#1b2740">16.08.16</text><text transform="translate(1263.75,165.0) rotate(-90)" textLength="40" lengthAdjust="spacingAndGlyphs" fill="#1b2740">17.08.16</text><text x="808.4" y="174.3" textLength="24.6" lengthAdjust="spacingAndGlyphs" fill="#1b2740">Даты</text><rect x="316.5" y="197.5" width="957" height="216" fill="#fff" stroke="#9a9a9a"/><rect x="369" y="245.0" width="894.7" height="1" fill="#e3e3e3"/><rect x="369" y="255.0" width="894.7" height="1" fill="#e3e3e3"/><rect x="369" y="265.0" width="894.7" height="1" fill="#e3e3e3"/><rect x="369" y="275.0" width="894.7" height="1" fill="#e3e3e3"/><rect x="369" y="285.0" width="894.7" height="1" fill="#e3e3e3"/><rect x="369" y="295.0" width="894.7" height="1" fill="#e3e3e3"/><rect x="369" y="305.0" width="894.7" height="1" fill="#e3e3e3"/><rect x="369" y="315.0" width="894.7" height="1" fill="#e3e3e3"/><rect x="369" y="325.0" width="894.7" height="1" fill="#e3e3e3"/><rect x="369" y="335.0" width="894.7" height="1" fill="#e3e3e3"/><rect x="369" y="345.0" width="894.7" height="1" fill="#e3e3e3"/><rect x="372" y="245" width="1" height="101" fill="#7a7a7a"/><rect x="372" y="345" width="891.7" height="1" fill="#7a7a7a"/><rect x="387.80" y="346" width="1" height="5" fill="#8aa0c0"/><rect x="417.83" y="346" width="1" height="5" fill="#8aa0c0"/><rect x="447.86" y="346" width="1" height="5" fill="#8aa0c0"/><rect x="477.89" y="346" width="1" height="5" fill="#8aa0c0"/><rect x="507.92" y="346" width="1" height="5" fill="#8aa0c0"/><rect x="537.95" y="346" width="1" height="5" fill="#8aa0c0"/><rect x="567.98" y="346" width="1" height="5" fill="#8aa0c0"/><rect x="598.01" y="346" width="1" height="5" fill="#8aa0c0"/><rect x="628.04" y="346" width="1" height="5" fill="#8aa0c0"/><rect x="658.07" y="346" width="1" height="5" fill="#8aa0c0"/><rect x="688.10" y="346" width="1" height="5" fill="#8aa0c0"/><rect x="718.13" y="346" width="1" height="5" fill="#8aa0c0"/><rect x="748.16" y="346" width="1" height="5" fill="#8aa0c0"/><rect x="778.19" y="346" width="1" height="5" fill="#8aa0c0"/><rect x="808.22" y="346" width="1" height="5" fill="#8aa0c0"/><rect x="838.25" y="346" width="1" height="5" fill="#8aa0c0"/><rect x="868.28" y="346" width="1" height="5" fill="#8aa0c0"/><rect x="898.31" y="346" width="1" height="5" fill="#8aa0c0"/><rect x="928.34" y="346" width="1" height="5" fill="#8aa0c0"/><rect x="958.37" y="346" width="1" height="5" fill="#8aa0c0"/><rect x="988.40" y="346" width="1" height="5" fill="#8aa0c0"/><rect x="1018.43" y="346" width="1" height="5" fill="#8aa0c0"/><rect x="1048.46" y="346" width="1" height="5" fill="#8aa0c0"/><rect x="1078.49" y="346" width="1" height="5" fill="#8aa0c0"/><rect x="1108.52" y="346" width="1" height="5" fill="#8aa0c0"/><rect x="1138.55" y="346" width="1" height="5" fill="#8aa0c0"/><rect x="1168.58" y="346" width="1" height="5" fill="#8aa0c0"/><rect x="1198.61" y="346" width="1" height="5" fill="#8aa0c0"/><rect x="1228.64" y="346" width="1" height="5" fill="#8aa0c0"/><rect x="1258.67" y="346" width="1" height="5" fill="#8aa0c0"/><text x="367.5" y="252.0" text-anchor="end" fill="#1b2740">16</text><text x="367.5" y="262.0" text-anchor="end" fill="#1b2740">14</text><text x="367.5" y="272.0" text-anchor="end" fill="#1b2740">12</text><text x="367.5" y="282.0" text-anchor="end" fill="#1b2740">11</text><text x="367.5" y="292.0" text-anchor="end" fill="#1b2740">9</text><text x="367.5" y="302.0" text-anchor="end" fill="#1b2740">8</text><text x="367.5" y="312.0" text-anchor="end" fill="#1b2740">6</text><text x="367.5" y="322.0" text-anchor="end" fill="#1b2740">4</text><text x="367.5" y="332.0" text-anchor="end" fill="#1b2740">3</text><text x="367.5" y="342.0" text-anchor="end" fill="#1b2740">1</text><text x="367.5" y="352.0" text-anchor="end" fill="#1b2740">0</text><text transform="translate(340.3,295.0) rotate(-90)" text-anchor="middle" textLength="58" lengthAdjust="spacingAndGlyphs" fill="#1b2740">Количество</text><polygon points="388.30,344.3 388.30,344.30 418.33,344.30 448.36,344.30 478.39,344.30 508.42,344.30 538.45,344.30 568.48,344.30 598.51,344.30 628.54,344.30 658.57,344.30 688.60,344.30 718.63,344.30 748.66,344.30 778.69,344.30 808.72,344.30 838.75,344.30 868.78,344.30 898.81,344.30 928.84,344.30 958.87,344.30 988.90,344.30 1018.93,288.44 1048.96,245.00 1078.99,344.30 1109.02,344.30 1139.05,344.30 1169.08,344.30 1199.11,344.30 1229.14,344.30 1259.17,307.06 1259.17,344.3" fill="rgba(154,44,162,0.24)"/><polyline points="388.30,344.30 418.33,344.30 448.36,344.30 478.39,344.30 508.42,344.30 538.45,344.30 568.48,344.30 598.51,344.30 628.54,344.30 658.57,344.30 688.60,344.30 718.63,344.30 748.66,344.30 778.69,344.30 808.72,344.30 838.75,344.30 868.78,344.30 898.81,344.30 928.84,344.30 958.87,344.30 988.90,344.30 1018.93,288.44 1048.96,245.00 1078.99,344.30 1109.02,344.30 1139.05,344.30 1169.08,344.30 1199.11,344.30 1229.14,344.30 1259.17,307.06" fill="none" stroke="#9a2ca2" stroke-width="3" stroke-linejoin="round"/><circle cx="388.30" cy="344.30" r="4" fill="#fff" stroke="#86168f" stroke-width="2"/><circle cx="418.33" cy="344.30" r="4" fill="#fff" stroke="#86168f" stroke-width="2"/><circle cx="448.36" cy="344.30" r="4" fill="#fff" stroke="#86168f" stroke-width="2"/><circle cx="478.39" cy="344.30" r="4" fill="#fff" stroke="#86168f" stroke-width="2"/><circle cx="508.42" cy="344.30" r="4" fill="#fff" stroke="#86168f" stroke-width="2"/><circle cx="538.45" cy="344.30" r="4" fill="#fff" stroke="#86168f" stroke-width="2"/><circle cx="568.48" cy="344.30" r="4" fill="#fff" stroke="#86168f" stroke-width="2"/><circle cx="598.51" cy="344.30" r="4" fill="#fff" stroke="#86168f" stroke-width="2"/><circle cx="628.54" cy="344.30" r="4" fill="#fff" stroke="#86168f" stroke-width="2"/><circle cx="658.57" cy="344.30" r="4" fill="#fff" stroke="#86168f" stroke-width="2"/><circle cx="688.60" cy="344.30" r="4" fill="#fff" stroke="#86168f" stroke-width="2"/><circle cx="718.63" cy="344.30" r="4" fill="#fff" stroke="#86168f" stroke-width="2"/><circle cx="748.66" cy="344.30" r="4" fill="#fff" stroke="#86168f" stroke-width="2"/><circle cx="778.69" cy="344.30" r="4" fill="#fff" stroke="#86168f" stroke-width="2"/><circle cx="808.72" cy="344.30" r="4" fill="#fff" stroke="#86168f" stroke-width="2"/><circle cx="838.75" cy="344.30" r="4" fill="#fff" stroke="#86168f" stroke-width="2"/><circle cx="868.78" cy="344.30" r="4" fill="#fff" stroke="#86168f" stroke-width="2"/><circle cx="898.81" cy="344.30" r="4" fill="#fff" stroke="#86168f" stroke-width="2"/><circle cx="928.84" cy="344.30" r="4" fill="#fff" stroke="#86168f" stroke-width="2"/><circle cx="958.87" cy="344.30" r="4" fill="#fff" stroke="#86168f" stroke-width="2"/><circle cx="988.90" cy="344.30" r="4" fill="#fff" stroke="#86168f" stroke-width="2"/><circle cx="1018.93" cy="288.44" r="4" fill="#fff" stroke="#86168f" stroke-width="2"/><circle cx="1048.96" cy="245.00" r="4" fill="#fff" stroke="#86168f" stroke-width="2"/><circle cx="1078.99" cy="344.30" r="4" fill="#fff" stroke="#86168f" stroke-width="2"/><circle cx="1109.02" cy="344.30" r="4" fill="#fff" stroke="#86168f" stroke-width="2"/><circle cx="1139.05" cy="344.30" r="4" fill="#fff" stroke="#86168f" stroke-width="2"/><circle cx="1169.08" cy="344.30" r="4" fill="#fff" stroke="#86168f" stroke-width="2"/><circle cx="1199.11" cy="344.30" r="4" fill="#fff" stroke="#86168f" stroke-width="2"/><circle cx="1229.14" cy="344.30" r="4" fill="#fff" stroke="#86168f" stroke-width="2"/><circle cx="1259.17" cy="307.06" r="4" fill="#fff" stroke="#86168f" stroke-width="2"/><text transform="translate(392.30,398.0) rotate(-90)" textLength="40" lengthAdjust="spacingAndGlyphs" fill="#1b2740">19.07.16</text><text transform="translate(422.33,398.0) rotate(-90)" textLength="40" lengthAdjust="spacingAndGlyphs" fill="#1b2740">20.07.16</text><text transform="translate(452.36,398.0) rotate(-90)" textLength="40" lengthAdjust="spacingAndGlyphs" fill="#1b2740">21.07.16</text><text transform="translate(482.39,398.0) rotate(-90)" textLength="40" lengthAdjust="spacingAndGlyphs" fill="#1b2740">22.07.16</text><text transform="translate(512.42,398.0) rotate(-90)" textLength="40" lengthAdjust="spacingAndGlyphs" fill="#1b2740">23.07.16</text><text transform="translate(542.45,398.0) rotate(-90)" textLength="40" lengthAdjust="spacingAndGlyphs" fill="#1b2740">24.07.16</text><text transform="translate(572.48,398.0) rotate(-90)" textLength="40" lengthAdjust="spacingAndGlyphs" fill="#1b2740">25.07.16</text><text transform="translate(602.51,398.0) rotate(-90)" textLength="40" lengthAdjust="spacingAndGlyphs" fill="#1b2740">26.07.16</text><text transform="translate(632.54,398.0) rotate(-90)" textLength="40" lengthAdjust="spacingAndGlyphs" fill="#1b2740">27.07.16</text><text transform="translate(662.57,398.0) rotate(-90)" textLength="40" lengthAdjust="spacingAndGlyphs" fill="#1b2740">28.07.16</text><text transform="translate(692.60,398.0) rotate(-90)" textLength="40" lengthAdjust="spacingAndGlyphs" fill="#1b2740">29.07.16</text><text transform="translate(722.63,398.0) rotate(-90)" textLength="40" lengthAdjust="spacingAndGlyphs" fill="#1b2740">30.07.16</text><text transform="translate(752.66,398.0) rotate(-90)" textLength="40" lengthAdjust="spacingAndGlyphs" fill="#1b2740">31.07.16</text><text transform="translate(782.69,398.0) rotate(-90)" textLength="40" lengthAdjust="spacingAndGlyphs" fill="#1b2740">01.08.16</text><text transform="translate(812.72,398.0) rotate(-90)" textLength="40" lengthAdjust="spacingAndGlyphs" fill="#1b2740">02.08.16</text><text transform="translate(842.75,398.0) rotate(-90)" textLength="40" lengthAdjust="spacingAndGlyphs" fill="#1b2740">03.08.16</text><text transform="translate(872.78,398.0) rotate(-90)" textLength="40" lengthAdjust="spacingAndGlyphs" fill="#1b2740">04.08.16</text><text transform="translate(902.81,398.0) rotate(-90)" textLength="40" lengthAdjust="spacingAndGlyphs" fill="#1b2740">05.08.16</text><text transform="translate(932.84,398.0) rotate(-90)" textLength="40" lengthAdjust="spacingAndGlyphs" fill="#1b2740">06.08.16</text><text transform="translate(962.87,398.0) rotate(-90)" textLength="40" lengthAdjust="spacingAndGlyphs" fill="#1b2740">07.08.16</text><text transform="translate(992.90,398.0) rotate(-90)" textLength="40" lengthAdjust="spacingAndGlyphs" fill="#1b2740">08.08.16</text><text transform="translate(1022.93,398.0) rotate(-90)" textLength="40" lengthAdjust="spacingAndGlyphs" fill="#1b2740">09.08.16</text><text transform="translate(1052.96,398.0) rotate(-90)" textLength="40" lengthAdjust="spacingAndGlyphs" fill="#1b2740">10.08.16</text><text transform="translate(1082.99,398.0) rotate(-90)" textLength="40" lengthAdjust="spacingAndGlyphs" fill="#1b2740">11.08.16</text><text transform="translate(1113.02,398.0) rotate(-90)" textLength="40" lengthAdjust="spacingAndGlyphs" fill="#1b2740">12.08.16</text><text transform="translate(1143.05,398.0) rotate(-90)" textLength="40" lengthAdjust="spacingAndGlyphs" fill="#1b2740">13.08.16</text><text transform="translate(1173.08,398.0) rotate(-90)" textLength="40" lengthAdjust="spacingAndGlyphs" fill="#1b2740">14.08.16</text><text transform="translate(1203.11,398.0) rotate(-90)" textLength="40" lengthAdjust="spacingAndGlyphs" fill="#1b2740">15.08.16</text><text transform="translate(1233.14,398.0) rotate(-90)" textLength="40" lengthAdjust="spacingAndGlyphs" fill="#1b2740">16.08.16</text><text transform="translate(1263.17,398.0) rotate(-90)" textLength="40" lengthAdjust="spacingAndGlyphs" fill="#1b2740">17.08.16</text><text x="810.4" y="407" textLength="24.6" lengthAdjust="spacingAndGlyphs" fill="#1b2740">Даты</text><g>
<defs><linearGradient id="bp" x1="0" y1="0" x2="0" y2="1"><stop offset="0" stop-color="#b9a2f8"/><stop offset="0.45" stop-color="#a581f4"/><stop offset="1" stop-color="#b79bf6"/></linearGradient>
<linearGradient id="bph" x1="0" y1="0" x2="0" y2="1"><stop offset="0" stop-color="#ffffff" stop-opacity="0.95"/><stop offset="1" stop-color="#d9ccff" stop-opacity="0.25"/></linearGradient>
<linearGradient id="bb" x1="0" y1="0" x2="0" y2="1"><stop offset="0" stop-color="#1a4fe0"/><stop offset="0.45" stop-color="#1048dc"/><stop offset="1" stop-color="#3f9bff"/></linearGradient>
<linearGradient id="bbh" x1="0" y1="0" x2="0" y2="1"><stop offset="0" stop-color="#a9d2ff" stop-opacity="0.95"/><stop offset="1" stop-color="#4a8cff" stop-opacity="0.1"/></linearGradient></defs>
<path d="M382.3 227.8 C385.5 226.8 386.6 225 386.6 223 L392 226 C389 227.6 385.5 228.2 382.3 227.8 Z" fill="#9b7af0" stroke="#6040c8" stroke-width="0.7"/>
<ellipse cx="394" cy="217.2" rx="13.5" ry="9.4" fill="url(#bp)" stroke="#5f3fc8" stroke-width="0.8"/>
<ellipse cx="394" cy="213.4" rx="10.6" ry="4.6" fill="url(#bph)"/>
<path d="M411.3 233.5 C408 233 406.4 231.4 406 229.6 L402 232 C405 233.4 408.4 233.9 411.3 233.5 Z" fill="#2a78f0" stroke="#0a2fb4" stroke-width="0.7"/>
<ellipse cx="401" cy="225.2" rx="10.2" ry="7.2" fill="url(#bb)" stroke="#0a2cb0" stroke-width="0.9"/>
<ellipse cx="401" cy="221.6" rx="7.6" ry="2.9" fill="url(#bbh)"/>
<circle cx="398.5" cy="224" r="0.8" fill="#e4eeff"/><circle cx="398.5" cy="227.6" r="0.8" fill="#e4eeff"/>
<path d="M402.6 221.8 C405.2 224 405.2 227.8 402.4 230" stroke="#e4eeff" stroke-width="1" fill="none"/>
</g><text x="416.3" y="225" font-weight="bold" stroke="#000" stroke-width="0.25" textLength="346.8" lengthAdjust="spacingAndGlyphs" fill="#000">Статистика по сообщениям переписок с участием пользователя</text><rect x="316.5" y="430.5" width="957" height="230" fill="#fff" stroke="#9a9a9a"/><rect x="363" y="478.0" width="900.5" height="1" fill="#e3e3e3"/><rect x="363" y="488.0" width="900.5" height="1" fill="#e3e3e3"/><rect x="363" y="498.0" width="900.5" height="1" fill="#e3e3e3"/><rect x="363" y="508.0" width="900.5" height="1" fill="#e3e3e3"/><rect x="363" y="518.0" width="900.5" height="1" fill="#e3e3e3"/><rect x="363" y="528.0" width="900.5" height="1" fill="#e3e3e3"/><rect x="363" y="538.0" width="900.5" height="1" fill="#e3e3e3"/><rect x="363" y="548.0" width="900.5" height="1" fill="#e3e3e3"/><rect x="363" y="558.0" width="900.5" height="1" fill="#e3e3e3"/><rect x="363" y="568.0" width="900.5" height="1" fill="#e3e3e3"/><rect x="363" y="578.0" width="900.5" height="1" fill="#e3e3e3"/><rect x="366" y="478" width="1" height="101" fill="#7a7a7a"/><rect x="366" y="578" width="897.5" height="1" fill="#7a7a7a"/><rect x="381.20" y="579" width="1" height="5" fill="#8aa0c0"/><rect x="411.45" y="579" width="1" height="5" fill="#8aa0c0"/><rect x="441.70" y="579" width="1" height="5" fill="#8aa0c0"/><rect x="471.95" y="579" width="1" height="5" fill="#8aa0c0"/><rect x="502.20" y="579" width="1" height="5" fill="#8aa0c0"/><rect x="532.45" y="579" width="1" height="5" fill="#8aa0c0"/><rect x="562.70" y="579" width="1" height="5" fill="#8aa0c0"/><rect x="592.95" y="579" width="1" height="5" fill="#8aa0c0"/><rect x="623.20" y="579" width="1" height="5" fill="#8aa0c0"/><rect x="653.45" y="579" width="1" height="5" fill="#8aa0c0"/><rect x="683.70" y="579" width="1" height="5" fill="#8aa0c0"/><rect x="713.95" y="579" width="1" height="5" fill="#8aa0c0"/><rect x="744.20" y="579" width="1" height="5" fill="#8aa0c0"/><rect x="774.45" y="579" width="1" height="5" fill="#8aa0c0"/><rect x="804.70" y="579" width="1" height="5" fill="#8aa0c0"/><rect x="834.95" y="579" width="1" height="5" fill="#8aa0c0"/><rect x="865.20" y="579" width="1" height="5" fill="#8aa0c0"/><rect x="895.45" y="579" width="1" height="5" fill="#8aa0c0"/><rect x="925.70" y="579" width="1" height="5" fill="#8aa0c0"/><rect x="955.95" y="579" width="1" height="5" fill="#8aa0c0"/><rect x="986.20" y="579" width="1" height="5" fill="#8aa0c0"/><rect x="1016.45" y="579" width="1" height="5" fill="#8aa0c0"/><rect x="1046.70" y="579" width="1" height="5" fill="#8aa0c0"/><rect x="1076.95" y="579" width="1" height="5" fill="#8aa0c0"/><rect x="1107.20" y="579" width="1" height="5" fill="#8aa0c0"/><rect x="1137.45" y="579" width="1" height="5" fill="#8aa0c0"/><rect x="1167.70" y="579" width="1" height="5" fill="#8aa0c0"/><rect x="1197.95" y="579" width="1" height="5" fill="#8aa0c0"/><rect x="1228.20" y="579" width="1" height="5" fill="#8aa0c0"/><rect x="1258.45" y="579" width="1" height="5" fill="#8aa0c0"/><text x="361.5" y="485.0" text-anchor="end" fill="#1b2740">9</text><text x="361.5" y="585.0" text-anchor="end" fill="#1b2740">0</text><text transform="translate(340.3,528.0) rotate(-90)" text-anchor="middle" textLength="58" lengthAdjust="spacingAndGlyphs" fill="#1b2740">Количество</text><polygon points="381.70,577.3 381.70,577.30 411.95,577.30 442.20,577.30 472.45,577.30 502.70,577.30 532.95,577.30 563.20,577.30 593.45,577.30 623.70,577.30 653.95,577.30 684.20,577.30 714.45,577.30 744.70,577.30 774.95,577.30 805.20,577.30 835.45,577.30 865.70,577.30 895.95,577.30 926.20,577.30 956.45,577.30 986.70,577.30 1016.95,577.30 1047.20,478.00 1077.45,577.30 1107.70,577.30 1137.95,577.30 1168.20,577.30 1198.45,577.30 1228.70,489.03 1258.95,555.23 1258.95,577.3" fill="rgba(110,132,71,0.22)"/><polyline points="381.70,577.30 411.95,577.30 442.20,577.30 472.45,577.30 502.70,577.30 532.95,577.30 563.20,577.30 593.45,577.30 623.70,577.30 653.95,577.30 684.20,577.30 714.45,577.30 744.70,577.30 774.95,577.30 805.20,577.30 835.45,577.30 865.70,577.30 895.95,577.30 926.20,577.30 956.45,577.30 986.70,577.30 1016.95,577.30 1047.20,478.00 1077.45,577.30 1107.70,577.30 1137.95,577.30 1168.20,577.30 1198.45,577.30 1228.70,489.03 1258.95,555.23" fill="none" stroke="#6e8447" stroke-width="3" stroke-linejoin="round"/><circle cx="381.70" cy="577.30" r="4" fill="#fff" stroke="#566f2c" stroke-width="2"/><circle cx="411.95" cy="577.30" r="4" fill="#fff" stroke="#566f2c" stroke-width="2"/><circle cx="442.20" cy="577.30" r="4" fill="#fff" stroke="#566f2c" stroke-width="2"/><circle cx="472.45" cy="577.30" r="4" fill="#fff" stroke="#566f2c" stroke-width="2"/><circle cx="502.70" cy="577.30" r="4" fill="#fff" stroke="#566f2c" stroke-width="2"/><circle cx="532.95" cy="577.30" r="4" fill="#fff" stroke="#566f2c" stroke-width="2"/><circle cx="563.20" cy="577.30" r="4" fill="#fff" stroke="#566f2c" stroke-width="2"/><circle cx="593.45" cy="577.30" r="4" fill="#fff" stroke="#566f2c" stroke-width="2"/><circle cx="623.70" cy="577.30" r="4" fill="#fff" stroke="#566f2c" stroke-width="2"/><circle cx="653.95" cy="577.30" r="4" fill="#fff" stroke="#566f2c" stroke-width="2"/><circle cx="684.20" cy="577.30" r="4" fill="#fff" stroke="#566f2c" stroke-width="2"/><circle cx="714.45" cy="577.30" r="4" fill="#fff" stroke="#566f2c" stroke-width="2"/><circle cx="744.70" cy="577.30" r="4" fill="#fff" stroke="#566f2c" stroke-width="2"/><circle cx="774.95" cy="577.30" r="4" fill="#fff" stroke="#566f2c" stroke-width="2"/><circle cx="805.20" cy="577.30" r="4" fill="#fff" stroke="#566f2c" stroke-width="2"/><circle cx="835.45" cy="577.30" r="4" fill="#fff" stroke="#566f2c" stroke-width="2"/><circle cx="865.70" cy="577.30" r="4" fill="#fff" stroke="#566f2c" stroke-width="2"/><circle cx="895.95" cy="577.30" r="4" fill="#fff" stroke="#566f2c" stroke-width="2"/><circle cx="926.20" cy="577.30" r="4" fill="#fff" stroke="#566f2c" stroke-width="2"/><circle cx="956.45" cy="577.30" r="4" fill="#fff" stroke="#566f2c" stroke-width="2"/><circle cx="986.70" cy="577.30" r="4" fill="#fff" stroke="#566f2c" stroke-width="2"/><circle cx="1016.95" cy="577.30" r="4" fill="#fff" stroke="#566f2c" stroke-width="2"/><circle cx="1047.20" cy="478.00" r="4" fill="#fff" stroke="#566f2c" stroke-width="2"/><circle cx="1077.45" cy="577.30" r="4" fill="#fff" stroke="#566f2c" stroke-width="2"/><circle cx="1107.70" cy="577.30" r="4" fill="#fff" stroke="#566f2c" stroke-width="2"/><circle cx="1137.95" cy="577.30" r="4" fill="#fff" stroke="#566f2c" stroke-width="2"/><circle cx="1168.20" cy="577.30" r="4" fill="#fff" stroke="#566f2c" stroke-width="2"/><circle cx="1198.45" cy="577.30" r="4" fill="#fff" stroke="#566f2c" stroke-width="2"/><circle cx="1228.70" cy="489.03" r="4" fill="#fff" stroke="#566f2c" stroke-width="2"/><circle cx="1258.95" cy="555.23" r="4" fill="#fff" stroke="#566f2c" stroke-width="2"/><text transform="translate(385.70,631.0) rotate(-90)" textLength="40" lengthAdjust="spacingAndGlyphs" fill="#1b2740">19.07.16</text><text transform="translate(415.95,631.0) rotate(-90)" textLength="40" lengthAdjust="spacingAndGlyphs" fill="#1b2740">20.07.16</text><text transform="translate(446.20,631.0) rotate(-90)" textLength="40" lengthAdjust="spacingAndGlyphs" fill="#1b2740">21.07.16</text><text transform="translate(476.45,631.0) rotate(-90)" textLength="40" lengthAdjust="spacingAndGlyphs" fill="#1b2740">22.07.16</text><text transform="translate(506.70,631.0) rotate(-90)" textLength="40" lengthAdjust="spacingAndGlyphs" fill="#1b2740">23.07.16</text><text transform="translate(536.95,631.0) rotate(-90)" textLength="40" lengthAdjust="spacingAndGlyphs" fill="#1b2740">24.07.16</text><text transform="translate(567.20,631.0) rotate(-90)" textLength="40" lengthAdjust="spacingAndGlyphs" fill="#1b2740">25.07.16</text><text transform="translate(597.45,631.0) rotate(-90)" textLength="40" lengthAdjust="spacingAndGlyphs" fill="#1b2740">26.07.16</text><text transform="translate(627.70,631.0) rotate(-90)" textLength="40" lengthAdjust="spacingAndGlyphs" fill="#1b2740">27.07.16</text><text transform="translate(657.95,631.0) rotate(-90)" textLength="40" lengthAdjust="spacingAndGlyphs" fill="#1b2740">28.07.16</text><text transform="translate(688.20,631.0) rotate(-90)" textLength="40" lengthAdjust="spacingAndGlyphs" fill="#1b2740">29.07.16</text><text transform="translate(718.45,631.0) rotate(-90)" textLength="40" lengthAdjust="spacingAndGlyphs" fill="#1b2740">30.07.16</text><text transform="translate(748.70,631.0) rotate(-90)" textLength="40" lengthAdjust="spacingAndGlyphs" fill="#1b2740">31.07.16</text><text transform="translate(778.95,631.0) rotate(-90)" textLength="40" lengthAdjust="spacingAndGlyphs" fill="#1b2740">01.08.16</text><text transform="translate(809.20,631.0) rotate(-90)" textLength="40" lengthAdjust="spacingAndGlyphs" fill="#1b2740">02.08.16</text><text transform="translate(839.45,631.0) rotate(-90)" textLength="40" lengthAdjust="spacingAndGlyphs" fill="#1b2740">03.08.16</text><text transform="translate(869.70,631.0) rotate(-90)" textLength="40" lengthAdjust="spacingAndGlyphs" fill="#1b2740">04.08.16</text><text transform="translate(899.95,631.0) rotate(-90)" textLength="40" lengthAdjust="spacingAndGlyphs" fill="#1b2740">05.08.16</text><text transform="translate(930.20,631.0) rotate(-90)" textLength="40" lengthAdjust="spacingAndGlyphs" fill="#1b2740">06.08.16</text><text transform="translate(960.45,631.0) rotate(-90)" textLength="40" lengthAdjust="spacingAndGlyphs" fill="#1b2740">07.08.16</text><text transform="translate(990.70,631.0) rotate(-90)" textLength="40" lengthAdjust="spacingAndGlyphs" fill="#1b2740">08.08.16</text><text transform="translate(1020.95,631.0) rotate(-90)" textLength="40" lengthAdjust="spacingAndGlyphs" fill="#1b2740">09.08.16</text><text transform="translate(1051.20,631.0) rotate(-90)" textLength="40" lengthAdjust="spacingAndGlyphs" fill="#1b2740">10.08.16</text><text transform="translate(1081.45,631.0) rotate(-90)" textLength="40" lengthAdjust="spacingAndGlyphs" fill="#1b2740">11.08.16</text><text transform="translate(1111.70,631.0) rotate(-90)" textLength="40" lengthAdjust="spacingAndGlyphs" fill="#1b2740">12.08.16</text><text transform="translate(1141.95,631.0) rotate(-90)" textLength="40" lengthAdjust="spacingAndGlyphs" fill="#1b2740">13.08.16</text><text transform="translate(1172.20,631.0) rotate(-90)" textLength="40" lengthAdjust="spacingAndGlyphs" fill="#1b2740">14.08.16</text><text transform="translate(1202.45,631.0) rotate(-90)" textLength="40" lengthAdjust="spacingAndGlyphs" fill="#1b2740">15.08.16</text><text transform="translate(1232.70,631.0) rotate(-90)" textLength="40" lengthAdjust="spacingAndGlyphs" fill="#1b2740">16.08.16</text><text transform="translate(1262.95,631.0) rotate(-90)" textLength="40" lengthAdjust="spacingAndGlyphs" fill="#1b2740">17.08.16</text><text x="808.6" y="640" textLength="24.6" lengthAdjust="spacingAndGlyphs" fill="#1b2740">Даты</text><g>
<defs><linearGradient id="fo" x1="0" y1="0" x2="0" y2="1"><stop offset="0" stop-color="#f3c4a2"/><stop offset="0.4" stop-color="#f49343"/><stop offset="0.75" stop-color="#f58b26"/><stop offset="1" stop-color="#f6bb2c"/></linearGradient></defs>
<path d="M385.5 440.4 H405.6 Q407 440.4 407 441.8 V452 L404.3 453.6 V463.6 H385.5 Z" fill="#fdfdfd" stroke="#c4c7cc" stroke-width="0.8"/>
<path d="M384.4 441.2 V464.4 Q384.4 465.5 385.5 465.5 H400.7 Q401.8 465.5 401.8 464.4 V455 L399.8 453.8 V444.2 Q399.8 443.2 398.8 443.2 H384.6" fill="url(#fo)" stroke="#bf8a2c" stroke-width="0.9"/>
<path d="M386 444.4 H399 V456.4 C 392.5 456 387.4 452.6 386 447.6 Z" fill="#fbe9dc" opacity="0.62"/>
</g><text x="416.3" y="458" font-weight="bold" stroke="#000" stroke-width="0.25" textLength="120.5" lengthAdjust="spacingAndGlyphs" fill="#000">Статистика по файлам</text></svg>
<div class="a" style="left:1282px;top:162px;width:16px;height:480px;background:#ebe9e4"></div>
<div class="a" style="left:1282px;top:162px;width:16px;height:16px;background:#d4d0c8;box-shadow:inset 1px 1px 0 #d4d0c8,inset -1px -1px 0 #404040,inset 2px 2px 0 #fff,inset -2px -2px 0 #808080"></div>
<svg class="a" style="left:1286px;top:168px" width="8" height="5"><path d="M0 4.5 L7 4.5 L3.5 0.8 Z" fill="#000"/></svg>
<div class="a" style="left:1282px;top:626px;width:16px;height:16px;background:#d4d0c8;box-shadow:inset 1px 1px 0 #d4d0c8,inset -1px -1px 0 #404040,inset 2px 2px 0 #fff,inset -2px -2px 0 #808080"></div>
<svg class="a" style="left:1286px;top:632px" width="8" height="5"><path d="M0 0.5 L7 0.5 L3.5 4.2 Z" fill="#000"/></svg>
<div class="a" style="left:1282px;top:286px;width:16px;height:76px;background:#d4d0c8;box-shadow:inset 1px 1px 0 #d4d0c8,inset -1px -1px 0 #404040,inset 2px 2px 0 #fff,inset -2px -2px 0 #808080"></div>
<div class="a" style="left:303px;top:647px;width:1002px;height:17px;background:#b0ccf4"></div>
<div class="a" style="left:304px;top:645px;width:999px;height:1px;background:#8a8883"></div>
<div class="a" style="left:304px;top:646px;width:999px;height:1px;background:#404040"></div>
<div class="a" style="left:304px;top:647px;width:382px;height:17px;background:#d4d0c8"></div>
<div class="a" style="left:434px;top:645px;width:159px;height:2px;background:#d4d0c8"></div>
<div class="a" style="left:304px;top:647px;width:1px;height:17px;background:#f4f3ef"></div>
<div class="a" style="left:432px;top:647px;width:1px;height:17px;background:#6a6a6a"></div>
<div class="a" style="left:433px;top:645px;width:1px;height:19px;background:#fff"></div>
<div class="a" style="left:592px;top:645px;width:1px;height:19px;background:#808080"></div>
<div class="a" style="left:593px;top:645px;width:1px;height:19px;background:#404040"></div>
<div class="a" style="left:684px;top:647px;width:1px;height:17px;background:#808080"></div>
<div class="a" style="left:685px;top:647px;width:1px;height:17px;background:#404040"></div>
<span class="t" style="left:318.70px;top:652.19px;font-size:11px;line-height:14px;color:#000;letter-spacing:-0.091px;">Дневная активность</span>
<span class="t" style="left:448.40px;top:652.19px;font-size:11px;line-height:14px;color:#000;letter-spacing:-0.097px;">Статистика по активности</span>
<span class="t" style="left:606.80px;top:652.19px;font-size:11px;line-height:14px;color:#000;letter-spacing:-0.226px;">Взаимосвязи</span>
</body>
</html>
